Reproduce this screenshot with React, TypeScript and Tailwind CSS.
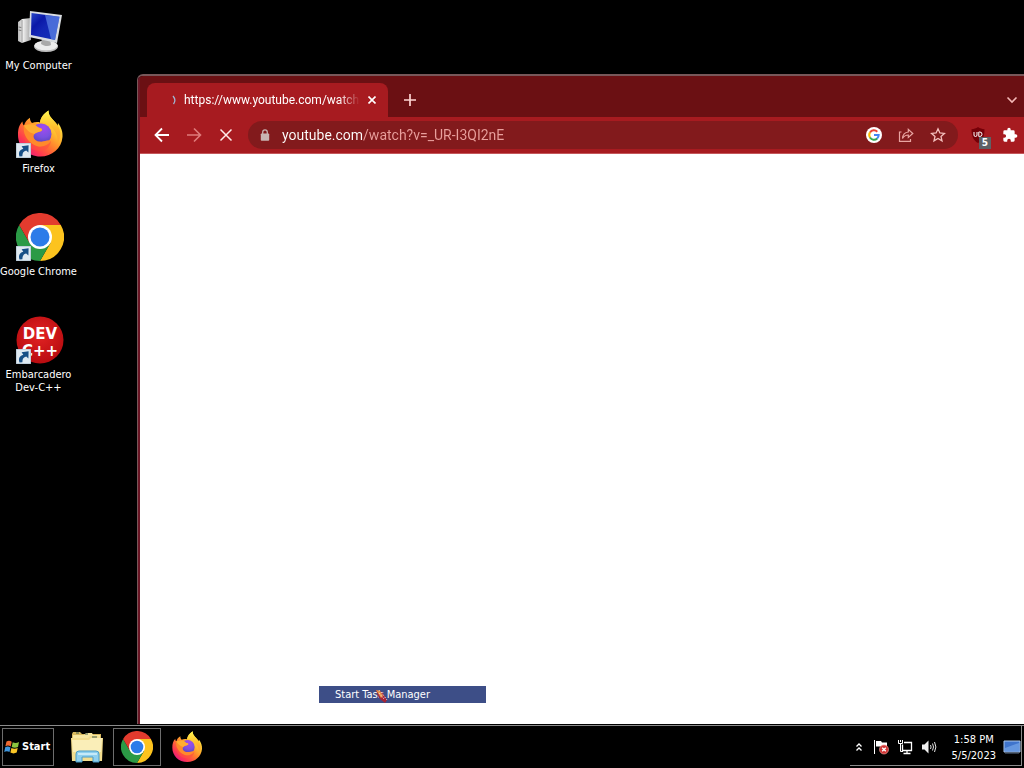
import React from 'react';

const ShortcutArrow = () => (
  <svg viewBox="0 0 15 15" className="absolute bottom-0 left-0.5 w-[15px] h-[15px]" aria-hidden="true">
    <rect x="0" y="0" width="15" height="15" fill="#dfe9f1" stroke="#9fb4c4" />
    <path d="M3.5 13.5C2 9 4 6.5 7.3 5.7L5.6 3.2L12.6 2.3L12.4 9.4L10.2 7.6C7.6 8.2 6.3 10 6.4 13.3Z" fill="#174f86" />
  </svg>
);

const ComputerIcon = () => (
  <svg viewBox="0 0 48 48" className="w-12 h-12" aria-hidden="true">
    <defs>
      <linearGradient id="screen" x1="0" y1="0" x2="1" y2="1">
        <stop offset="0" stopColor="#2848c8" />
        <stop offset=".3" stopColor="#0a18a8" />
        <stop offset=".5" stopColor="#1226b4" />
        <stop offset="1" stopColor="#1534b8" />
      </linearGradient>
      <linearGradient id="case" x1="0" y1="0" x2="1" y2="0">
        <stop offset="0" stopColor="#b8b8b8" />
        <stop offset=".4" stopColor="#eeeeee" />
        <stop offset="1" stopColor="#a2a2a2" />
      </linearGradient>
    </defs>
    <path d="M2 15L6 12L15 11V33L6 36L2 34Z" fill="url(#case)" />
    <path d="M6 13V36" stroke="#8e8e8e" strokeWidth=".8" />
    <path d="M2.6 20L5.3 20.5M2.6 23L5.3 23.5" stroke="#777" />
    <ellipse cx="30" cy="39.5" rx="12" ry="5.5" fill="#bdbdbd" />
    <ellipse cx="30" cy="38.5" rx="11.5" ry="4.8" fill="#ececec" />
    <path d="M26 31L34 32L35 38C32 40 28 39 25 37Z" fill="#a9a9a9" />
    <path d="M14 4L46 8L41 36L13 30Z" fill="#d9dde1" />
    <path d="M15.5 6L43.5 9.7L39 33L15 28Z" fill="url(#screen)" />
    <path d="M29 8L43.5 9.7L39 33L35 32Z" fill="#6c98f0" opacity=".6" />
  </svg>
);

const FirefoxIcon = ({ className }: { className: string }) => (
  <svg viewBox="0 0 48 48" className={className} aria-hidden="true">
    <defs>
      <linearGradient id="flame" x1=".85" y1=".1" x2=".15" y2=".95">
        <stop offset="0" stopColor="#fff04a" />
        <stop offset=".3" stopColor="#ffbd2e" />
        <stop offset=".55" stopColor="#ff7a2e" />
        <stop offset=".8" stopColor="#ff3750" />
        <stop offset="1" stopColor="#e31587" />
      </linearGradient>
      <linearGradient id="tail" x1=".5" y1="0" x2=".5" y2="1">
        <stop offset="0" stopColor="#fff650" />
        <stop offset=".5" stopColor="#ffc02c" />
        <stop offset="1" stopColor="#ff6a3a" stopOpacity="0" />
      </linearGradient>
      <radialGradient id="globe" cx=".6" cy=".2" r=".9">
        <stop offset="0" stopColor="#a24bf0" />
        <stop offset=".5" stopColor="#7a50e0" />
        <stop offset="1" stopColor="#4b3ba8" />
      </radialGradient>
    </defs>
    <path d="M2 25C2 19 3 15 6.5 11.5C6.5 13.5 7 14.5 8 15.5C9 12 11 9.5 14 7.8C13.8 10 14.8 12 16 13C18.5 12 22 11.8 24 12.5C24.5 7.5 28 3.5 32.5 0.5C32.5 6 36 8.5 39 12C40.5 13.5 41 14.5 41.5 16L42 13C45 17 47 21.5 46.5 27C45.5 38.5 36 46.5 24.5 46.5C11.5 46.5 2 37 2 25Z" fill="url(#flame)" />
    <path d="M24 12.5C24.5 7.5 28 3.5 32.5 .5C32.5 6 36 8.5 39 12C45.5 19 46 27 41.5 33.5C43 25 37 17.5 32 14.5C29 12.8 27 12.3 24 12.5Z" fill="url(#tail)" />
    <circle cx="25" cy="24" r="10.5" fill="url(#globe)" />
    <path d="M8 15.5C12 14 19 13.5 21 16.5C22.5 18.2 26.5 18 26 20C25.4 22 20.5 21.7 18.5 24C16 27 19 31 23 31.5C29 32.4 31 29 35 31C31 36.5 24 38.5 18 35C11 31 6.5 24 8 15.5Z" fill="#ff8a2b" />
    <path d="M8 15.5C12 14 19 13.5 21 16.5C22.5 18.2 26.5 18 26 20C25.4 22 20.5 21.7 18.5 24C14 23 10.5 20.5 8 15.5Z" fill="#ffae32" />
    <path d="M35 31C31 36.5 24 38.5 18 35C14 33 10 29 8.5 24C7 33 14 40.5 24 41C30 41 34 37 35 31Z" fill="#ff5040" opacity=".6" />
  </svg>
);

const ChromeIcon = ({ className }: { className: string }) => (
  <svg viewBox="0 0 48 48" className={className} aria-hidden="true">
    <path d="M24 12H44.8A24 24 0 0 1 24 48L34.4 30Z" fill="#fcc31e" />
    <path d="M13.6 30L3.2 12A24 24 0 0 0 24 48L34.4 30Z" fill="#2b9a46" />
    <path d="M3.2 12L13.6 30L24 24L24 12H44.8A24 24 0 0 0 3.2 12Z" fill="#e33b2e" />
    <circle cx="24" cy="24" r="12" fill="#fff" />
    <circle cx="24" cy="24" r="9.5" fill="#2b7be9" />
  </svg>
);

const DevIcon = () => (
  <svg viewBox="0 0 48 48" className="w-12 h-12" aria-hidden="true">
    <defs>
      <radialGradient id="dev" cx=".5" cy=".4" r=".6">
        <stop offset="0" stopColor="#e22323" />
        <stop offset="1" stopColor="#b80c10" />
      </radialGradient>
    </defs>
    <circle cx="24" cy="24" r="23.5" fill="url(#dev)" />
    <text x="24" y="23" textAnchor="middle" fontSize="15" fontWeight="700" fontFamily="DejaVu Sans, sans-serif" fill="#fff">DEV</text>
    <text x="24" y="40" textAnchor="middle" fontSize="15" fontWeight="700" fontFamily="DejaVu Sans, sans-serif" fill="#fff">C++</text>
  </svg>
);

const FolderIcon = () => (
  <svg viewBox="0 0 34 32" className="w-[34px] h-8" aria-hidden="true">
    <path d="M2 3L3 1H10L12 3H31V29H2Z" fill="#d8b95e" />
    <path d="M3 4H14L16 2H22L23 4H30V10H3Z" fill="#f7e7a1" />
    <path d="M1 7H18L20 5H28L30 7H33L32 30H2Z" fill="#f3dd8e" />
    <path d="M2 9H19L21 7H32L31 21H3Z" fill="#faeeb8" />
    <path d="M6 2H9M15 3H18M22 6H27" stroke="#3e5a4a" strokeWidth="1.2" />
    <path d="M6 31V23Q6 20 9 20H26Q29 20 29 23V31H23V26H12V31Z" fill="#8fd0ee" stroke="#4a9cc8" />
    <path d="M8 23H27" stroke="#d9f3fd" strokeWidth="1.5" />
  </svg>
);

const WindowsFlag = () => (
  <svg viewBox="0 0 16 16" className="w-4 h-4" aria-hidden="true">
    <path d="M2.5 2.5C4.5 1.4 6 1.7 7.7 2.7L6.7 7.4C5 6.4 3.3 6.3 1.4 7.2Z" fill="#ee6a32" />
    <path d="M8.7 3.2C10.7 4.1 12.5 4.2 15 3L14 7.9C11.8 9 9.7 8.9 7.7 7.9Z" fill="#8cc63f" />
    <path d="M1.2 8.2C3.2 7.3 4.8 7.5 6.5 8.4L5.5 13.1C4 12.1 2.1 12 .2 12.9Z" fill="#3f96dc" />
    <path d="M7.4 8.9C9.4 9.9 11.5 9.9 13.7 8.9L12.7 13.6C10.5 14.7 8.3 14.6 6.4 13.6Z" fill="#fbc727" />
  </svg>
);

const GoogleIcon = () => (
  <svg viewBox="0 0 16 16" className="w-4 h-4" aria-hidden="true">
    <circle cx="8" cy="8" r="8" fill="#fff" />
    <g fill="none" strokeWidth="2">
      <path d="M4 5.5A4.7 4.7 0 0 1 11.3 4.7" stroke="#ea4335" />
      <path d="M4.1 10.6A4.7 4.7 0 0 1 4 5.4" stroke="#fbbc05" />
      <path d="M11.2 11.4A4.7 4.7 0 0 1 4 10.5" stroke="#34a853" />
      <path d="M8 8H12.7A4.7 4.7 0 0 1 11.1 11.5" stroke="#4285f4" />
    </g>
  </svg>
);

const PuzzleIcon = () => (
  <svg viewBox="0 0 24 24" className="w-4 h-4" fill="#fff" aria-hidden="true">
    <path d="M20.5 11H19V7a2 2 0 0 0-2-2h-4V3.5a2.5 2.5 0 0 0-5 0V5H4a2 2 0 0 0-2 2v3.8h1.5a2.7 2.7 0 0 1 0 5.4H2V20a2 2 0 0 0 2 2h3.8v-1.5a2.7 2.7 0 0 1 5.4 0V22H17a2 2 0 0 0 2-2v-4h1.5a2.5 2.5 0 0 0 0-5z" />
  </svg>
);

const shortcuts = [
  { name: 'My Computer', icon: <ComputerIcon />, linked: false },
  { name: 'Firefox', icon: <FirefoxIcon className="w-12 h-12" />, linked: true },
  { name: 'Google Chrome', icon: <ChromeIcon className="w-12 h-12" />, linked: true },
  { name: 'Embarcadero\nDev-C++', icon: <DevIcon />, linked: true },
];

function DesktopIcons() {
  return (
    <nav className="w-[77px] shrink-0 flex flex-col gap-[38px] pt-[7px]" aria-label="Desktop">
      {shortcuts.map((item) => (
        <button key={item.name} className="flex flex-col items-center gap-1">
          <span className="relative pl-0.5">
            {item.icon}
            {item.linked && <ShortcutArrow />}
          </span>
          <span className="text-[11px] leading-[13px] text-center whitespace-pre text-white">{item.name}</span>
        </button>
      ))}
    </nav>
  );
}

function TabStrip() {
  return (
    <div className="flex items-end h-[41px] pl-[7px] pr-1.5 bg-[#6b1013] font-[Roboto,'Noto_Sans',sans-serif]">
      <div className="flex items-center w-[241px] h-[34px] pl-[25px] pr-2 rounded-t-lg bg-[#a71b20]">
        <svg viewBox="0 0 4 10" className="w-1 h-2.5 mr-2 shrink-0" aria-hidden="true">
          <path d="M1 1Q4.5 5 1.5 9" fill="none" stroke="#9fb3cf" strokeWidth="1.3" />
        </svg>
        <button className="flex-1 min-w-0 whitespace-nowrap text-left text-xs text-white mask-r-from-88%">
          https://www.youtube.com/watch
        </button>
        <button aria-label="Close tab" className="ml-1 p-1">
          <svg viewBox="0 0 8 8" className="w-2 h-2" aria-hidden="true">
            <path d="M.5.5L7.5 7.5M7.5.5L.5 7.5" stroke="#fff" strokeWidth="1.6" />
          </svg>
        </button>
      </div>
      <button aria-label="New tab" className="ml-4 mb-[11px]">
        <svg viewBox="0 0 12 12" className="w-3 h-3" aria-hidden="true">
          <path d="M6 0V12M0 6H12" stroke="#ffd5d3" strokeWidth="1.7" />
        </svg>
      </button>
      <button aria-label="Search tabs" className="ml-auto mb-3">
        <svg viewBox="0 0 12 10" className="w-3 h-2.5" aria-hidden="true">
          <path d="M1.5 2.5L6 7L10.5 2.5" fill="none" stroke="#f5b9b7" strokeWidth="1.6" />
        </svg>
      </button>
    </div>
  );
}

function Toolbar() {
  return (
    <div className="flex items-center h-[37px] pl-[14px] pr-1.5 bg-[#a71b20] border-b border-[#c4575b]">
      <div className="flex items-center gap-4">
        <button aria-label="Back">
          <svg viewBox="0 0 16 16" className="w-4 h-4" fill="none" stroke="#fff" strokeWidth="1.8" aria-hidden="true">
            <path d="M15 8H2M8 1.5L1.5 8L8 14.5" />
          </svg>
        </button>
        <button aria-label="Forward">
          <svg viewBox="0 0 16 16" className="w-4 h-4" fill="none" stroke="#e07c7b" strokeWidth="1.6" aria-hidden="true">
            <path d="M1 8H14M8 1.5L14.5 8L8 14.5" />
          </svg>
        </button>
        <button aria-label="Stop">
          <svg viewBox="0 0 16 16" className="w-4 h-4" fill="none" stroke="#ffe9e8" strokeWidth="1.5" aria-hidden="true">
            <path d="M2.5 2.5L13.5 13.5M13.5 2.5L2.5 13.5" />
          </svg>
        </button>
      </div>
      <div className="flex flex-1 items-center h-7 ml-[14px] px-3 rounded-full bg-[#821a1c]">
        <svg viewBox="0 0 10 12" className="w-2.5 h-3 shrink-0" aria-hidden="true">
          <path d="M2.7 5V3.2A2.3 2.3 0 0 1 7.3 3.2V5" fill="none" stroke="#c9b5b2" strokeWidth="1.3" />
          <rect x=".8" y="4.5" width="8.4" height="7.2" rx=".8" fill="#c9b5b2" />
        </svg>
        <input
          aria-label="Address"
          defaultValue="youtube.com/watch?v=_UR-I3QI2nE"
          className="flex-1 min-w-0 ml-3 text-sm leading-5 outline-none text-transparent bg-clip-text bg-[linear-gradient(90deg,#fff_80px,#e9a09d_80px)] font-[Roboto,'Noto_Sans',sans-serif]"
        />
        <div className="flex items-center gap-4">
          <button aria-label="Search with Google"><GoogleIcon /></button>
          <button aria-label="Share">
            <svg viewBox="0 0 16 16" className="w-4 h-4" fill="none" stroke="#e9a5a2" strokeWidth="1.2" aria-hidden="true">
              <path d="M3.5 5H1.5V14.3H12.5V12" />
              <path d="M4.5 11.5C4.8 7.5 7 5.3 10.3 5V2.3L14.8 6.5L10.3 10.5V8C7.8 8 6 9 4.5 11.5Z" />
            </svg>
          </button>
          <button aria-label="Bookmark">
            <svg viewBox="0 0 16 16" className="w-4 h-4" fill="none" stroke="#f5c0bd" strokeWidth="1.3" aria-hidden="true">
              <path d="M8 1.8L9.9 6L14.4 6.4L11 9.4L12 13.9L8 11.5L4 13.9L5 9.4L1.6 6.4L6.1 6Z" />
            </svg>
          </button>
        </div>
      </div>
      <div className="flex items-center gap-4 ml-3">
        <button aria-label="uBlock Origin, 5 blocked" className="relative">
          <svg viewBox="0 0 16 16" className="w-4 h-4" aria-hidden="true">
            <path d="M8 0C10 1.5 12 2 14.5 2.2C14.5 9 13 13 8 16C3 13 1.5 9 1.5 2.2C4 2 6 1.5 8 0Z" fill="#750008" />
            <path d="M4 5V8Q4 9.5 5.5 9.5T7 8V5M8.8 5V9.5H9.7Q12 9.5 12 7.2T9.7 5Z" fill="none" stroke="#fff" />
          </svg>
          <span className="absolute left-[9px] top-2.5 w-3 h-3 bg-[#5d6166] text-[10px] leading-3 font-bold text-white">5</span>
        </button>
        <button aria-label="Extensions"><PuzzleIcon /></button>
      </div>
    </div>
  );
}

function BrowserWindow() {
  return (
    <section className="flex-1 min-w-0 flex flex-col mt-[74px] ml-[60px] mb-px border-t-2 border-l border-[#78585a] rounded-tl-md overflow-hidden">
      <div className="flex-1 flex flex-col border-l-2 border-[#6b1726]">
        <TabStrip />
        <Toolbar />
        <div className="relative flex-1 bg-white">
          <button className="absolute left-[179px] bottom-[21px] w-[167px] h-[17px] pl-4 bg-[#3d4e87] text-left text-[11px] leading-4 text-white">
            Start Task Manager
            <svg viewBox="0 0 14 14" className="absolute left-[56px] top-1 w-3.5 h-3.5" aria-hidden="true">
              <path d="M1 0L7 2L12 10L10 13L4 8Z" fill="#a92435" />
              <path d="M1 0L5 1L8 6L6 8Z" fill="#e8964a" />
              <path d="M4 3L9 9M6 2L12 10" stroke="#e9d5dc" strokeDasharray="1.5 1.5" />
            </svg>
          </button>
        </div>
      </div>
    </section>
  );
}

function Tray() {
  return (
    <div className="flex items-center ml-auto mb-0.5 mr-0.5 pt-0.5 pl-[5px] border-b border-r border-[#8b8b8b]">
      <button aria-label="Show hidden icons">
        <svg viewBox="0 0 8 10" className="w-2 h-2.5" fill="none" stroke="#fff" strokeWidth="1.3" aria-hidden="true">
          <path d="M1.5 4.5L4 2L6.5 4.5M1.5 8.5L4 6L6.5 8.5" />
        </svg>
      </button>
      <button aria-label="Action Center" className="ml-[10px]">
        <svg viewBox="0 0 16 16" className="w-4 h-4" aria-hidden="true">
          <path d="M1.5 1V15" stroke="#fff" />
          <path d="M3 2H8L9 3.5H14V9H9L8 7.5H3Z" fill="#fff" />
          <circle cx="11" cy="10.5" r="4.5" fill="#cf3434" stroke="#f29a94" strokeWidth=".7" />
          <path d="M9.2 8.7L12.8 12.3M12.8 8.7L9.2 12.3" stroke="#fff" strokeWidth="1.4" />
        </svg>
      </button>
      <button aria-label="Network" className="ml-2">
        <svg viewBox="0 0 16 16" className="w-4 h-4" fill="none" stroke="#fff" aria-hidden="true">
          <path d="M1.5 1V4.5H5.5V1M3.5 1V3M3.5 4.5V12.5H6" />
          <path d="M7 3.5H14.5V11.5H5.5V5.5M10 11.5V14M6.5 14.5H13.5" strokeWidth="1.3" />
        </svg>
      </button>
      <button aria-label="Volume" className="ml-2">
        <svg viewBox="0 0 16 16" className="w-4 h-4" fill="none" stroke="#e4e4e4" aria-hidden="true">
          <path d="M1 5.5H3.5L7.5 1.5V14.5L3.5 10.5H1Z" fill="#f2f2f2" stroke="none" />
          <path d="M9.5 6Q10.7 8 9.5 10M11.5 4.5Q13.5 8 11.5 11.5M13.5 3Q16.3 8 13.5 13" />
        </svg>
      </button>
      <button className="flex flex-col items-center ml-[15px] pt-0.5 text-[11px] leading-4 text-white">
        <span>1:58 PM</span>
        <span>5/5/2023</span>
      </button>
      <button aria-label="Show desktop" className="ml-[7px]">
        <svg viewBox="0 0 18 16" className="w-[18px] h-4" aria-hidden="true">
          <path d="M1 2H17V13H1Z" fill="#3f74cc" stroke="#a9c6ec" />
          <path d="M2 9L16 4V12H2Z" fill="#76a7e8" opacity=".7" />
          <path d="M2 14.5H16" stroke="#303a48" />
        </svg>
      </button>
    </div>
  );
}

function Taskbar() {
  return (
    <footer className="flex h-[43px] shrink-0 border-t border-[#8b8b8b] bg-black">
      <button className="flex items-center gap-0.5 w-[52px] my-0.5 ml-0.5 pl-px border border-[#6d6d6d] text-white text-[11px] font-bold">
        <WindowsFlag />
        Start
      </button>
      <button aria-label="File Explorer" className="ml-4"><FolderIcon /></button>
      <button aria-label="Google Chrome" className="flex items-center justify-center w-12 my-0.5 ml-[9px] border border-[#6d6d6d]">
        <ChromeIcon className="w-8 h-8" />
      </button>
      <button aria-label="Firefox" className="ml-[10px]"><FirefoxIcon className="w-8 h-8" /></button>
      <Tray />
    </footer>
  );
}

export default function App() {
  return (
    <div className="flex flex-col min-h-screen overflow-hidden bg-black font-['DejaVu_Sans_Condensed','Noto_Sans',sans-serif]">
      <main className="flex flex-1">
        <DesktopIcons />
        <BrowserWindow />
      </main>
      <Taskbar />
    </div>
  );
}
